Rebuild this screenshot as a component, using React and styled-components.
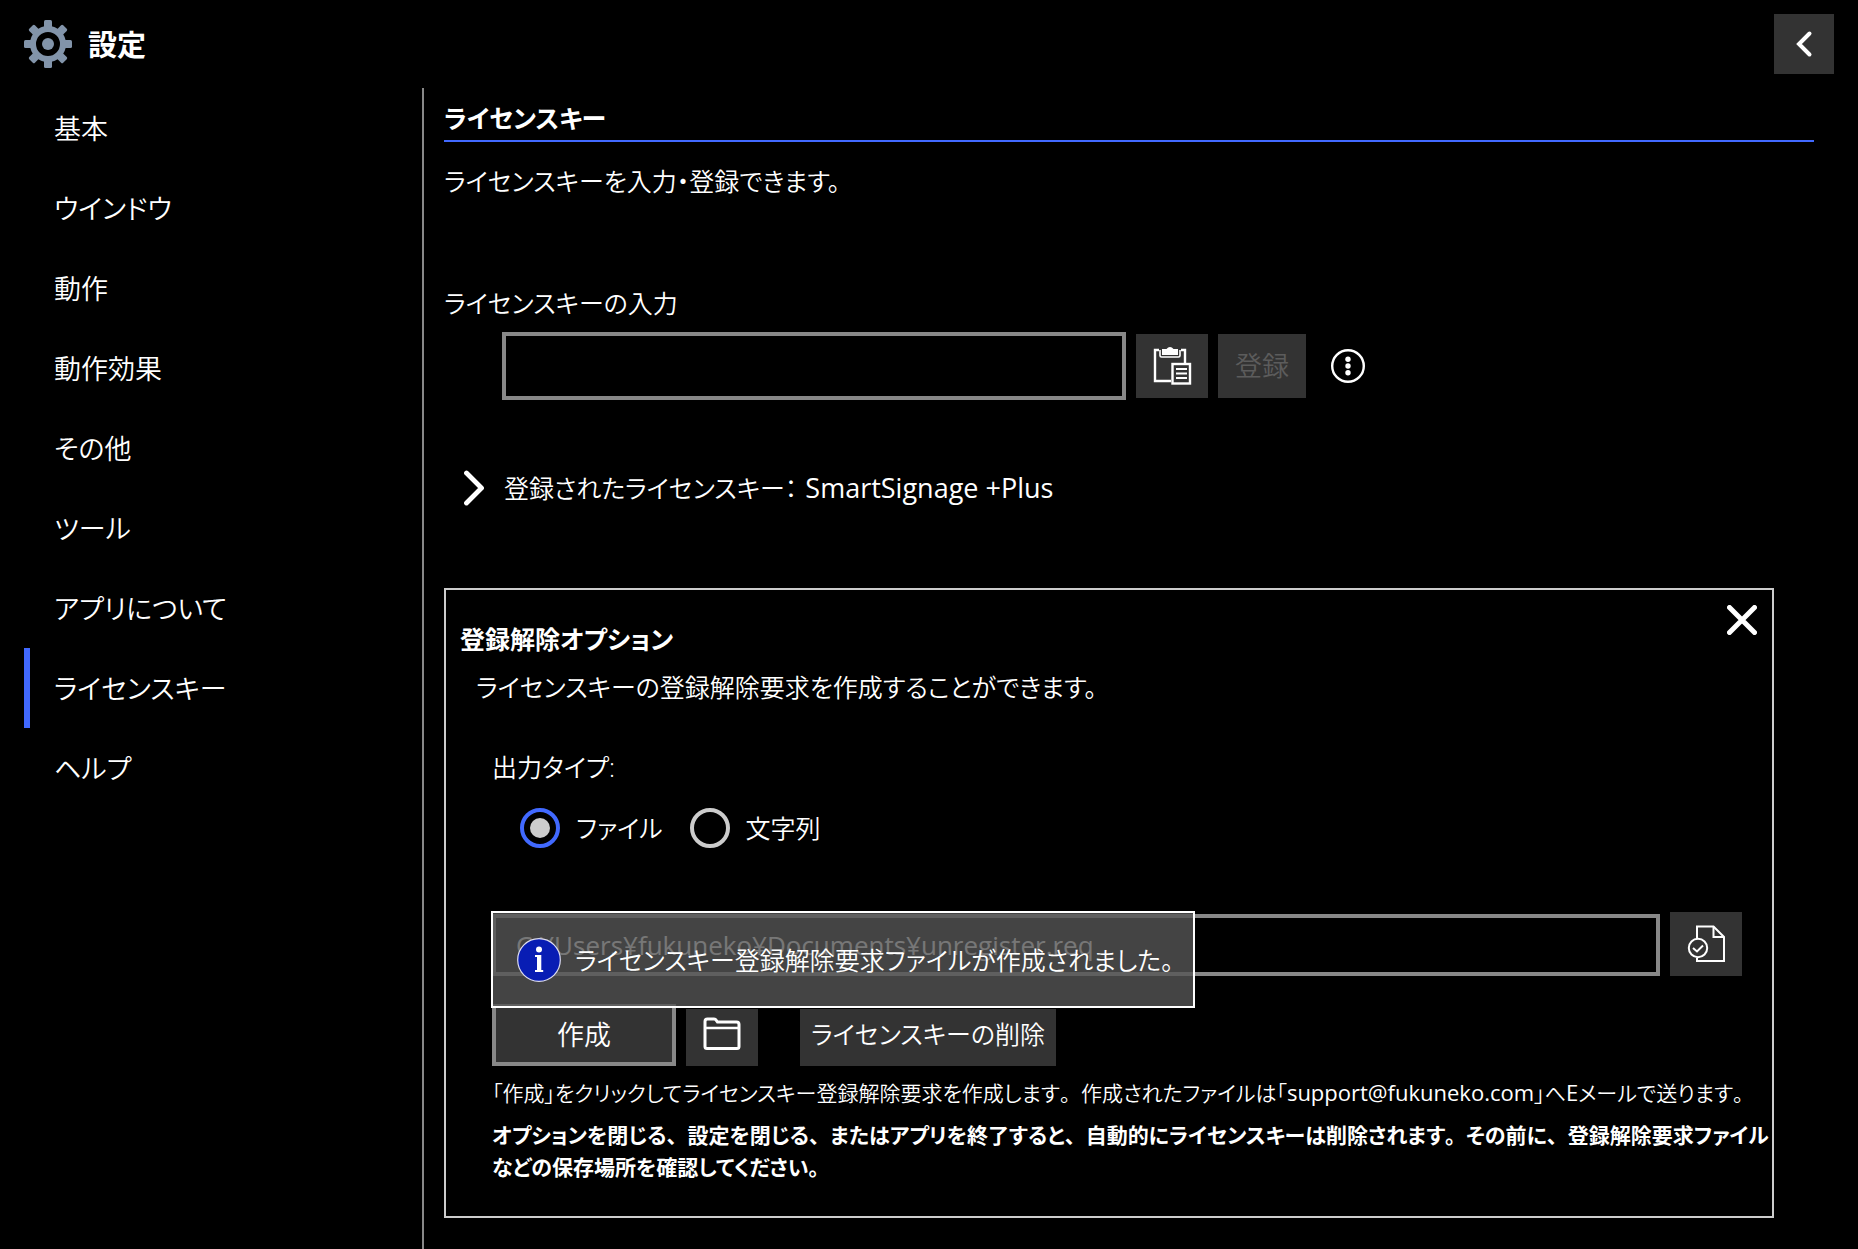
import React, { useState } from "react";
import styled, { createGlobalStyle } from "styled-components";

const menuItems = [
  "基本",
  "ウインドウ",
  "動作",
  "動作効果",
  "その他",
  "ツール",
  "アプリについて",
  "ライセンスキー",
  "ヘルプ",
];

const outputTypes = [
  { id: "file", label: "ファイル" },
  { id: "text", label: "文字列" },
];

function GearIcon() {
  return (
    <svg width="48" height="48" viewBox="0 0 48 48" aria-hidden="true">
      <g fill="#8294aa">
        {[0, 45, 90, 135].map((angle) => (
          <g key={angle} transform={`rotate(${angle} 24 24)`}>
            <rect x="20" y="0" width="8" height="11" rx="1.5" />
            <rect x="20" y="37" width="8" height="11" rx="1.5" />
          </g>
        ))}
        <circle cx="24" cy="24" r="6" />
      </g>
      <circle cx="24" cy="24" r="15" fill="none" stroke="#8294aa" strokeWidth="6" />
    </svg>
  );
}

function BackIcon() {
  return (
    <svg width="28" height="28" viewBox="0 0 28 28" aria-hidden="true">
      <path
        d="M19.5 3.5 L9 14 L19.5 24.5"
        fill="none"
        stroke="#fff"
        strokeWidth="4"
        strokeLinecap="round"
      />
    </svg>
  );
}

function PasteIcon() {
  return (
    <svg width="40" height="40" viewBox="0 0 40 40" fill="none" aria-hidden="true">
      <path d="M7 4 H3 V35 H19 M29 4 H33 V17" stroke="#fff" strokeWidth="2.4" />
      <path d="M8 4 V9.5 Q8 11 9.5 11 H26.5 Q28 11 28 9.5 V4" stroke="#fff" strokeWidth="1.6" />
      <path d="M10 3 H14.5 Q16 1 18 1 Q20 1 21.5 3 H26 V9 H10 Z" fill="#fff" />
      <rect x="20.5" y="18" width="17.5" height="19.5" stroke="#fff" strokeWidth="2.4" />
      <path d="M24 23 H35 M24 27.5 H35 M24 32 H35" stroke="#fff" strokeWidth="2.2" />
    </svg>
  );
}

function MoreIcon() {
  return (
    <svg width="36" height="36" viewBox="0 0 36 36" aria-hidden="true">
      <circle cx="18" cy="18" r="15.8" fill="none" stroke="#fff" strokeWidth="2.4" />
      <circle cx="18" cy="11.3" r="2.7" fill="#fff" />
      <circle cx="18" cy="18" r="2.7" fill="#fff" />
      <circle cx="18" cy="24.7" r="2.7" fill="#fff" />
    </svg>
  );
}

function ChevronIcon() {
  return (
    <svg width="20" height="36" viewBox="0 0 20 36" aria-hidden="true">
      <path
        d="M2.5 3 L17.5 18 L2.5 33"
        fill="none"
        stroke="#fff"
        strokeWidth="4.8"
        strokeLinecap="round"
        strokeLinejoin="round"
      />
    </svg>
  );
}

function CloseIcon() {
  return (
    <svg width="30" height="30" viewBox="0 0 30 30" aria-hidden="true">
      <path
        d="M2.5 2.5 L27.5 27.5 M27.5 2.5 L2.5 27.5"
        stroke="#fff"
        strokeWidth="5"
        strokeLinecap="round"
      />
    </svg>
  );
}

function SaveTargetIcon() {
  return (
    <svg width="38" height="38" viewBox="0 0 38 38" fill="none" aria-hidden="true">
      <path
        d="M10 14 V1.5 H26.5 L37 12 V36 H10 V33"
        stroke="#fff"
        strokeWidth="2"
      />
      <path d="M26.5 1.5 V12 H37" stroke="#fff" strokeWidth="2" />
      <circle cx="11" cy="23" r="9.2" stroke="#fff" strokeWidth="2" />
      <path d="M6 23 L10 26.5 L16 20.5" stroke="#fff" strokeWidth="2" />
    </svg>
  );
}

function FolderIcon() {
  return (
    <svg width="38" height="34" viewBox="0 0 38 34" fill="none" aria-hidden="true">
      <path
        d="M2 4.5 Q2 2 4.5 2 H11 Q12.5 2 13.3 3.3 L14.5 5 H33.5 Q36 5 36 7.5 V29.5 Q36 31.5 34 31.5 H4 Q2 31.5 2 29.5 Z"
        stroke="#fff"
        strokeWidth="3"
      />
      <path d="M2 11 H36" stroke="#fff" strokeWidth="2.6" />
    </svg>
  );
}

function InfoIcon() {
  return (
    <svg width="44" height="44" viewBox="0 0 44 44" aria-hidden="true">
      <circle cx="22" cy="22" r="21.3" fill="#081db4" stroke="#dcdcf0" strokeWidth="1.2" />
      <circle cx="22" cy="11.5" r="3" fill="#fff" />
      <path d="M18 17 H24.3 V32 H26.2 V34 H18 V32 H20 V19 H18 Z" fill="#fff" />
    </svg>
  );
}

// Commas and full stops keep their full em while the kana are set proportionally
function Sentence({ text }) {
  return text
    .split(/([、。])/)
    .map((part, i) => (i % 2 ? <FullWidth key={i}>{part}</FullWidth> : part));
}

function UnregisterPanel() {
  const [outputType, setOutputType] = useState("file");

  return (
    <Panel>
      <CloseButton type="button" aria-label="閉じる">
        <CloseIcon />
      </CloseButton>
      <PanelTitle>登録解除オプション</PanelTitle>
      <PanelLead>ライセンスキーの登録解除要求を作成することができます。</PanelLead>
      <PanelBody>
        <OutputGroup>
          <OutputLegend>出力タイプ:</OutputLegend>
          <RadioRow>
            {outputTypes.map(({ id, label }) => (
              <RadioLabel key={id}>
                <Radio
                  name="outputType"
                  value={id}
                  checked={outputType === id}
                  onChange={() => setOutputType(id)}
                />
                {label}
              </RadioLabel>
            ))}
          </RadioRow>
        </OutputGroup>
        <OutputArea>
          <PathRow>
            <PathInput
              aria-label="保存先"
              readOnly
              value="C:¥Users¥fukuneko¥Documents¥unregister.req"
            />
            <IconButton type="button" aria-label="保存先を選択">
              <SaveTargetIcon />
            </IconButton>
          </PathRow>
          <ActionRow>
            <CreateButton type="button">作成</CreateButton>
            <FolderButton type="button" aria-label="フォルダーを開く">
              <FolderIcon />
            </FolderButton>
            <DeleteButton type="button">ライセンスキーの削除</DeleteButton>
          </ActionRow>
          <Toast role="status">
            <InfoIcon />
            <span>ライセンスキー登録解除要求ファイルが作成されました。</span>
          </Toast>
        </OutputArea>
        <Note>
          <Sentence text="「作成」をクリックしてライセンスキー登録解除要求を作成します。作成されたファイルは「" />
          <Latin>support@fukuneko.com</Latin>
          」へ<Latin>E</Latin>
          <Sentence text="メールで送ります。" />
        </Note>
        <Note $strong>
          <Sentence text="オプションを閉じる、設定を閉じる、またはアプリを終了すると、自動的にライセンスキーは削除されます。その前に、登録解除要求ファイル" />
          <br />
          <Sentence text="などの保存場所を確認してください。" />
        </Note>
      </PanelBody>
    </Panel>
  );
}

function App() {
  const [selected, setSelected] = useState("ライセンスキー");
  const [licenseKey, setLicenseKey] = useState("");

  return (
    <Page>
      <GlobalStyle />
      <Header>
        <GearIcon />
        <Title>設定</Title>
        <BackButton type="button" aria-label="戻る">
          <BackIcon />
        </BackButton>
      </Header>
      <Columns>
        <Sidebar>
          {menuItems.map((item) => (
            <MenuLink
              key={item}
              href="#"
              $active={item === selected}
              onClick={() => setSelected(item)}
            >
              {item}
            </MenuLink>
          ))}
        </Sidebar>
        <Main>
          <SectionTitle>ライセンスキー</SectionTitle>
          <Lead>ライセンスキーを入力・登録できます。</Lead>
          <KeyLabel htmlFor="licenseKey">ライセンスキーの入力</KeyLabel>
          <KeyRow>
            <KeyInput
              id="licenseKey"
              value={licenseKey}
              onChange={(e) => setLicenseKey(e.target.value)}
            />
            <IconButton type="button" aria-label="貼り付け">
              <PasteIcon />
            </IconButton>
            <RegisterButton type="button" disabled={!licenseKey}>
              登録
            </RegisterButton>
            <MoreButton type="button" aria-label="その他のオプション">
              <MoreIcon />
            </MoreButton>
          </KeyRow>
          <Expander type="button" aria-expanded="false">
            <ChevronIcon />
            <ExpanderText>
              <span>登録されたライセンスキー：</span>
              <ProductName>SmartSignage +Plus</ProductName>
            </ExpanderText>
          </Expander>
          <UnregisterPanel />
        </Main>
      </Columns>
    </Page>
  );
}

export default App;

const GlobalStyle = createGlobalStyle`
  * {
    box-sizing: border-box;
  }
  body {
    margin: 0;
    background: #000;
    color: #fff;
    font-family: "Open Sans", "Noto Sans CJK JP", sans-serif;
    font-size: 25px;
    font-weight: 350;
    line-height: 44px;
    font-feature-settings: "palt";
  }
  button, input {
    font: inherit;
    font-feature-settings: inherit;
    color: inherit;
    border-radius: 0;
    margin: 0;
  }
  h1, h2, h3, p {
    margin: 0;
  }
`;

const Page = styled.div`
  min-height: 100vh;
  display: flex;
  flex-direction: column;
`;

const Header = styled.header`
  height: 88px;
  padding: 0 24px;
  display: flex;
  align-items: center;
  gap: 16px;
`;

const Title = styled.h1`
  flex: 1;
  padding-top: 2px;
  font-size: 29px;
  font-weight: 700;
`;

const BaseButton = styled.button`
  display: flex;
  align-items: center;
  justify-content: center;
  flex: none;
  padding: 0;
  border: none;
  background: #333;
  cursor: pointer;
`;

const BackButton = styled(BaseButton)`
  width: 60px;
  height: 60px;
`;

const Columns = styled.div`
  flex: 1;
  display: flex;
`;

const Sidebar = styled.nav`
  width: 424px;
  flex: none;
  padding-left: 24px;
  border-right: 2px solid #888;
`;

const MenuLink = styled.a`
  display: flex;
  align-items: center;
  height: 80px;
  padding: 2px 0 0 24px;
  border-left: 6px solid ${(props) => (props.$active ? "#4169ff" : "transparent")};
  color: #fff;
  font-size: 27px;
  text-decoration: none;
`;

const Main = styled.main`
  flex: 1;
  min-width: 0;
  padding: 0 44px 30px 20px;
`;

const SectionTitle = styled.h2`
  padding: 8px 0 0;
  border-bottom: 2px solid #4169ff;
  font-size: 25px;
  font-weight: 700;
`;

const Lead = styled.p`
  margin-top: 17px;
`;

const KeyLabel = styled.label`
  display: block;
  margin-top: 78px;
`;

const KeyRow = styled.div`
  display: flex;
  align-items: center;
  gap: 10px;
  margin-top: 7px;
  padding-left: 58px;
`;

const TextInput = styled.input`
  min-width: 0;
  padding: 0 20px;
  border: 4px solid #888;
  background: #000;
  font-size: 26px;
  font-weight: 400;
  outline: none;
`;

const KeyInput = styled(TextInput)`
  width: 624px;
  height: 68px;
`;

const IconButton = styled(BaseButton)`
  width: 72px;
  height: 64px;
`;

const RegisterButton = styled(BaseButton)`
  width: 88px;
  height: 64px;
  font-size: 27px;
  color: ${(props) => (props.disabled ? "#5c5c5c" : "#fff")};
`;

const MoreButton = styled(BaseButton)`
  margin-left: 14px;
  background: none;
`;

const Expander = styled(BaseButton)`
  gap: 20px;
  margin: 66px 0 0 20px;
  background: none;
`;

const ExpanderText = styled.span`
  display: flex;
  gap: 8px;
`;

const ProductName = styled.span`
  font-size: 27px;
  font-weight: 400;
`;

const Panel = styled.section`
  position: relative;
  margin: 78px 40px 0 0;
  padding: 27px 2px 33px 14px;
  border: 2px solid #ccc;
`;

const CloseButton = styled(BaseButton)`
  position: absolute;
  top: 15px;
  right: 15px;
  background: none;
`;

const PanelTitle = styled.h3`
  font-size: 25px;
  font-weight: 700;
`;

const PanelLead = styled.p`
  margin-top: 4px;
  padding-left: 16px;
`;

const PanelBody = styled.div`
  padding-left: 32px;
`;

const OutputGroup = styled.fieldset`
  margin: 36px 0 0;
  padding: 0;
  border: none;
`;

const OutputLegend = styled.legend`
  padding: 0;
`;

const RadioRow = styled.div`
  display: flex;
  gap: 27px;
  margin-top: 17px;
  padding-left: 28px;
`;

const RadioLabel = styled.label`
  display: flex;
  align-items: center;
  gap: 16px;
`;

const Radio = styled.input.attrs({ type: "radio" })`
  appearance: none;
  display: grid;
  place-items: center;
  width: 40px;
  height: 40px;
  border: 4px solid #ccc;
  border-radius: 50%;

  &:checked {
    border-color: #4169ff;
  }
  &:checked::before {
    content: "";
    width: 20px;
    height: 20px;
    border-radius: 50%;
    background: #ccc;
  }
`;

const OutputArea = styled.div`
  position: relative;
  margin-top: 62px;
`;

const PathRow = styled.div`
  display: flex;
  align-items: flex-end;
  gap: 10px;
  padding-right: 28px;
`;

const PathInput = styled(TextInput)`
  flex: 1;
  height: 62px;
`;

const ActionRow = styled.div`
  display: flex;
  align-items: flex-end;
  gap: 10px;
  margin-top: 28px;
`;

const CreateButton = styled(BaseButton)`
  width: 184px;
  height: 62px;
  border: 4px solid #888;
  font-size: 27px;
`;

const FolderButton = styled(BaseButton)`
  width: 72px;
  height: 57px;
  padding-bottom: 8px;
`;

const DeleteButton = styled(BaseButton)`
  min-width: 256px;
  height: 57px;
  margin-left: 32px;
  padding-bottom: 8px;
`;

const Toast = styled.div`
  position: absolute;
  top: -1px;
  left: -1px;
  display: flex;
  align-items: center;
  gap: 14px;
  width: 704px;
  height: 97px;
  padding-left: 24px;
  border: 2px solid #fff;
  background: rgba(85, 85, 85, 0.8);
  white-space: nowrap;
`;

const Note = styled.p`
  margin-top: 10px;
  font-size: 21px;
  font-weight: ${(props) => (props.$strong ? 700 : 350)};
  line-height: 32px;
`;

const Latin = styled.span`
  font-size: 22px;
  font-weight: 400;
`;

const FullWidth = styled.span`
  font-feature-settings: normal;
`;
